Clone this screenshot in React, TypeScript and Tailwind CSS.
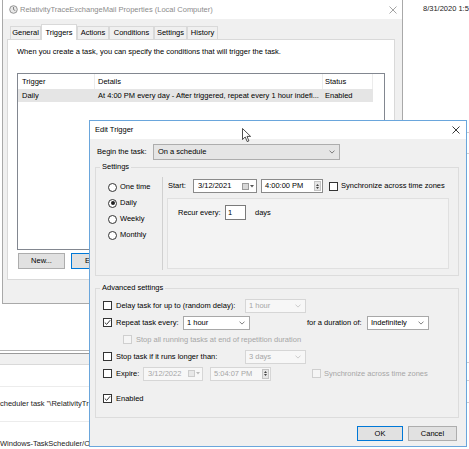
import React from "react";

const Chevron = ({ color = "#606060" }: { color?: string }) => (
  <svg width="6" height="4" viewBox="0 0 6 4" className="shrink-0">
    <path d="M0.5 0.6 L3 3.1 L5.5 0.6" fill="none" stroke={color} strokeWidth="0.8" />
  </svg>
);

const CloseX = ({ color }: { color: string }) => (
  <svg width="8" height="8" viewBox="0 0 8 8" className="shrink-0">
    <path d="M0.5 0.5 L7.5 7.5 M7.5 0.5 L0.5 7.5" stroke={color} strokeWidth="0.9" />
  </svg>
);

const Check = ({ checked = false, disabled = false }: { checked?: boolean; disabled?: boolean }) => (
  <span
    className={`w-[9px] h-[9px] shrink-0 border flex items-center justify-center ${
      disabled ? "border-[#cfcfcf] bg-[#f5f5f5]" : "border-[#333333] bg-white"
    }`}
  >
    {checked && (
      <svg width="7" height="7" viewBox="0 0 7 7">
        <path d="M0.8 3.6 L2.7 5.4 L6.2 1.2" fill="none" stroke="#222" strokeWidth="0.9" />
      </svg>
    )}
  </span>
);

const Radio = ({ checked = false, label }: { checked?: boolean; label: string }) => (
  <div className="h-[16px] flex items-center gap-[3px]">
    <span className="w-[9px] h-[9px] rounded-full border border-[#333333] bg-white flex items-center justify-center">
      {checked && <span className="w-[4px] h-[4px] rounded-full bg-[#222222]" />}
    </span>
    <span>{label}</span>
  </div>
);

const Combo = ({
  value,
  className,
  disabled = false,
}: {
  value: string;
  className: string;
  disabled?: boolean;
}) => (
  <div
    className={`h-[14px] shrink-0 flex items-center justify-between pl-[3px] pr-[4px] border ${
      disabled
        ? "border-[#d6d6d6] bg-[#f7f7f7] text-[#a6a6a6]"
        : "border-[#a8a8a8] bg-white"
    } ${className}`}
  >
    <span>{value}</span>
    <Chevron color={disabled ? "#c0c0c0" : "#606060"} />
  </div>
);

const DateBox = ({
  value,
  className,
  disabled = false,
}: {
  value: string;
  className: string;
  disabled?: boolean;
}) => (
  <div
    className={`h-[14px] shrink-0 flex items-center justify-between pl-[4px] pr-[2px] border ${
      disabled ? "border-[#d6d6d6] bg-[#f7f7f7] text-[#a6a6a6]" : "border-[#8a8a8a] bg-white"
    } ${className}`}
  >
    <span>{value}</span>
    <span className="flex items-center gap-[1px]">
      <span
        className={`w-[7px] h-[7px] border ${
          disabled ? "border-[#cccccc] bg-[#e8e8e8]" : "border-[#9a9a9a] bg-[#d8d8d8]"
        }`}
      />
      <svg width="4" height="3" viewBox="0 0 4 3">
        <path d="M0 0 L4 0 L2 2.5 Z" fill={disabled ? "#bbbbbb" : "#555555"} />
      </svg>
    </span>
  </div>
);

const TimeBox = ({
  value,
  className,
  disabled = false,
}: {
  value: string;
  className: string;
  disabled?: boolean;
}) => (
  <div
    className={`h-[14px] shrink-0 flex items-center justify-between pl-[3px] pr-[1px] border ${
      disabled ? "border-[#d6d6d6] bg-[#f7f7f7] text-[#a6a6a6]" : "border-[#8a8a8a] bg-white"
    } ${className}`}
  >
    <span>{value}</span>
    <span className="w-[7px] h-[10px] bg-[#e6e6e6] border border-[#c4c4c4] flex flex-col items-center justify-center gap-[1px]">
      <svg width="3" height="2" viewBox="0 0 3 2">
        <path d="M0 2 L1.5 0 L3 2 Z" fill="#444" />
      </svg>
      <svg width="3" height="2" viewBox="0 0 3 2">
        <path d="M0 0 L3 0 L1.5 2 Z" fill="#444" />
      </svg>
    </span>
  </div>
);

const Button = ({ label, className }: { label: string; className: string }) => (
  <div
    className={`h-[15px] shrink-0 flex items-center justify-center bg-[#e1e1e1] border ${className}`}
  >
    {label}
  </div>
);

const tabs = [
  { name: "General", w: "w-[31px]" },
  { name: "Triggers", w: "w-[36px]", active: true },
  { name: "Actions", w: "w-[32px]" },
  { name: "Conditions", w: "w-[45px]" },
  { name: "Settings", w: "w-[33px]" },
  { name: "History", w: "w-[31px]" },
];

export default function App() {
  return (
    <div className="relative w-[469px] h-[449px] overflow-hidden bg-white text-black text-[7.5px] leading-[10px] font-['Liberation_Sans',Arial,sans-serif]">
      {/* right pane of the task scheduler behind */}
      <div className="absolute left-[403px] top-0 w-[66px] h-[449px] bg-white flex flex-col overflow-hidden">
        <div className="h-[132px] pl-[20px] pt-[4px] whitespace-nowrap text-[#222]">8/31/2020 1:5</div>
        <div className="h-[21px] border-t border-[#cfcfcf]" />
        <div className="h-[209px] border-t border-[#cfcfcf]" />
        <div className="h-[18px] border-t border-[#cfcfcf]" />
        <div className="h-[22px] border-t border-[#cfcfcf]" />
        <div className="flex-1 border-t border-[#cfcfcf]" />
      </div>

      {/* lower left pane of the task scheduler behind */}
      <div className="absolute left-0 top-[304px] w-[89px] h-[145px] bg-white flex flex-col whitespace-nowrap overflow-hidden">
        <div className="h-[49px]" />
        <div className="h-[4px] border-t border-[#b4b4b4]" />
        <div className="h-[11px] border-t border-[#9a9a9a] bg-[#f0f0f0]" />
        <div className="h-[24px] border-t border-[#d9d9d9]" />
        <div className="h-[38px] border-t border-[#ececec] flex items-center text-[#222]">
          cheduler task "\RelativityTr
        </div>
        <div className="h-[19px] border-t border-[#ececec]" />
        <div className="flex-1 flex items-center text-[#222]">Windows-TaskScheduler/O</div>
      </div>

      {/* properties window */}
      <div className="absolute left-[2px] top-0 w-[401px] h-[304px] bg-[#f0f0f0] border-x border-b border-[#a9a9a9] flex flex-col">
        <div className="h-[19px] bg-white flex items-center justify-between pl-[6px] pr-[5px] text-[#8c8c8c]">
          <div className="flex items-center gap-[2px]">
            <svg width="9" height="9" viewBox="0 0 9 9">
              <circle cx="4.5" cy="4.5" r="3.8" fill="#e8e8e8" stroke="#8a8a8a" strokeWidth="0.9" />
              <path d="M4.5 2 L4.5 4.6 L6.3 5.6" fill="none" stroke="#6a6a6a" strokeWidth="0.8" />
            </svg>
            <span>RelativityTraceExchangeMail Properties (Local Computer)</span>
          </div>
          <CloseX color="#9a9a9a" />
        </div>

        <div className="h-[20px] flex items-end pl-[7px]">
          {tabs.map((t) => (
            <div
              key={t.name}
              className={`${t.w} flex items-center justify-center border-t border-x border-[#d9d9d9] ${
                t.active ? "h-[16px] bg-white relative z-10 -mb-px" : "h-[13px] bg-[#f0f0f0]"
              }`}
            >
              {t.name}
            </div>
          ))}
        </div>

        <div className="ml-[4px] w-[388px] h-[241px] bg-white border border-[#d9d9d9] pl-[9px] pt-[7px]">
          <div className="h-[10px] whitespace-nowrap">
            When you create a task, you can specify the conditions that will trigger the task.
          </div>
          <div className="mt-[16px] w-[368px] h-[177px] border border-[#828790] bg-white">
            <div className="h-[15px] flex items-center">
              <div className="w-[77px] h-full flex items-center pl-[4px] border-r border-[#ececec]">Trigger</div>
              <div className="w-[228px] h-full flex items-center pl-[3px] border-r border-[#ececec]">Details</div>
              <div className="w-[50px] h-full flex items-center pl-[2px] border-r border-[#ececec]">Status</div>
            </div>
            <div className="h-[13px] w-[355px] bg-[#e5e5e5] flex items-center whitespace-nowrap">
              <div className="w-[77px] pl-[4px]">Daily</div>
              <div className="w-[228px] pl-[3px] overflow-hidden">
                At 4:00 PM every day - After triggered, repeat every 1 hour indefi...
              </div>
              <div className="w-[50px] pl-[2px]">Enabled</div>
            </div>
          </div>
          <div className="mt-[3px] flex gap-[6px] pl-[1px]">
            <Button label="New..." className="w-[47px] h-[16px] border-[#adadad]" />
            <Button label="Edit..." className="w-[47px] h-[16px] border-[#0078d7]" />
          </div>
        </div>
      </div>

      {/* edit trigger dialog */}
      <div className="absolute left-[89px] top-[120px] w-[378px] h-[327px] bg-[#f0f0f0] border border-[#6aa6dc] flex flex-col">
        <div className="h-[18px] shrink-0 bg-white flex items-center justify-between pl-[5px] pr-[6px]">
          <span>Edit Trigger</span>
          <CloseX color="#222222" />
        </div>

        <div className="mt-[5px] h-[16px] flex items-center pl-[7px]">
          <span className="w-[56px]">Begin the task:</span>
          <div className="w-[187px] h-[16px] flex items-center justify-between pl-[4px] pr-[4px] bg-[#e5e5e5] border border-[#adadad]">
            <span>On a schedule</span>
            <Chevron />
          </div>
        </div>

        <fieldset className="mt-[2px] ml-[5px] w-[364px] h-[114px] border border-[#dcdcdc]">
          <legend className="ml-[4px] px-[2px] leading-[10px]">Settings</legend>
          <div className="flex h-[100px]">
            <div className="w-[66px] pl-[12px] pt-[7px] flex flex-col">
              <Radio label="One time" />
              <Radio label="Daily" checked />
              <Radio label="Weekly" />
              <Radio label="Monthly" />
            </div>
            <div className="w-px mt-[5px] h-[93px] bg-[#d0d0d0]" />
            <div className="pl-[4px] pt-[7px] flex flex-col">
              <div className="h-[14px] flex items-center whitespace-nowrap">
                <span className="ml-[1px] w-[25px]">Start:</span>
                <DateBox value="3/12/2021" className="w-[64px]" />
                <TimeBox value="4:00:00 PM" className="ml-[4px] w-[62px]" />
                <span className="ml-[6px]">
                  <Check />
                </span>
                <span className="ml-[3px]">Synchronize across time zones</span>
              </div>
              <div className="mt-[5px] w-[282px] h-[71px] border border-[#e0e0e0] bg-[#f3f3f3] pl-[10px] pt-[6px]">
                <div className="h-[15px] flex items-center">
                  <span className="w-[47px]">Recur every:</span>
                  <div className="w-[21px] h-[15px] border border-[#7a7a7a] bg-white pl-[2px] flex items-center">1</div>
                  <span className="ml-[9px]">days</span>
                </div>
              </div>
            </div>
          </div>
        </fieldset>

        <fieldset className="mt-[7px] ml-[5px] w-[364px] h-[135px] border border-[#dcdcdc]">
          <legend className="ml-[4px] px-[2px] leading-[10px]">Advanced settings</legend>
          <div className="pt-[4px] pl-[7px] flex flex-col whitespace-nowrap">
            <div className="h-[17px] flex items-center">
              <Check />
              <span className="ml-[4px] w-[129px]">Delay task for up to (random delay):</span>
              <Combo value="1 hour" className="w-[61px]" disabled />
            </div>
            <div className="h-[17px] flex items-center">
              <Check checked />
              <span className="ml-[4px] w-[67px]">Repeat task every:</span>
              <Combo value="1 hour" className="w-[67px]" />
              <span className="ml-[57px] w-[60px]">for a duration of:</span>
              <Combo value="Indefinitely" className="w-[62px]" />
            </div>
            <div className="h-[17px] flex items-center pl-[20px] text-[#a6a6a6]">
              <Check disabled />
              <span className="ml-[4px]">Stop all running tasks at end of repetition duration</span>
            </div>
            <div className="h-[17px] flex items-center">
              <Check />
              <span className="ml-[4px] w-[129px]">Stop task if it runs longer than:</span>
              <Combo value="3 days" className="w-[61px]" disabled />
            </div>
            <div className="h-[17px] flex items-center">
              <Check />
              <span className="ml-[4px] w-[27px]">Expire:</span>
              <DateBox value="3/12/2022" className="w-[60px]" disabled />
              <TimeBox value="5:04:07 PM" className="ml-[7px] w-[61px]" disabled />
              <span className="ml-[41px]">
                <Check disabled />
              </span>
              <span className="ml-[3px] text-[#a6a6a6]">Synchronize across time zones</span>
            </div>
            <div className="mt-[8px] h-[17px] flex items-center">
              <Check checked />
              <span className="ml-[4px]">Enabled</span>
            </div>
          </div>
        </fieldset>

        <div className="mt-[8px] flex justify-end gap-[5px] pr-[9px]">
          <Button label="OK" className="w-[46px] border-[#0078d7]" />
          <Button label="Cancel" className="w-[49px] border-[#adadad]" />
        </div>
      </div>

      {/* mouse pointer */}
      <svg className="absolute left-[242px] top-[128px]" width="10" height="15" viewBox="0 0 10 15">
        <path
          d="M0.5 0.5 L0.5 11.5 L3.2 9 L5.2 13.6 L6.9 12.9 L5 8.4 L8.6 8.4 Z"
          fill="white"
          stroke="#222"
          strokeWidth="0.8"
          strokeLinejoin="round"
        />
      </svg>
    </div>
  );
}
